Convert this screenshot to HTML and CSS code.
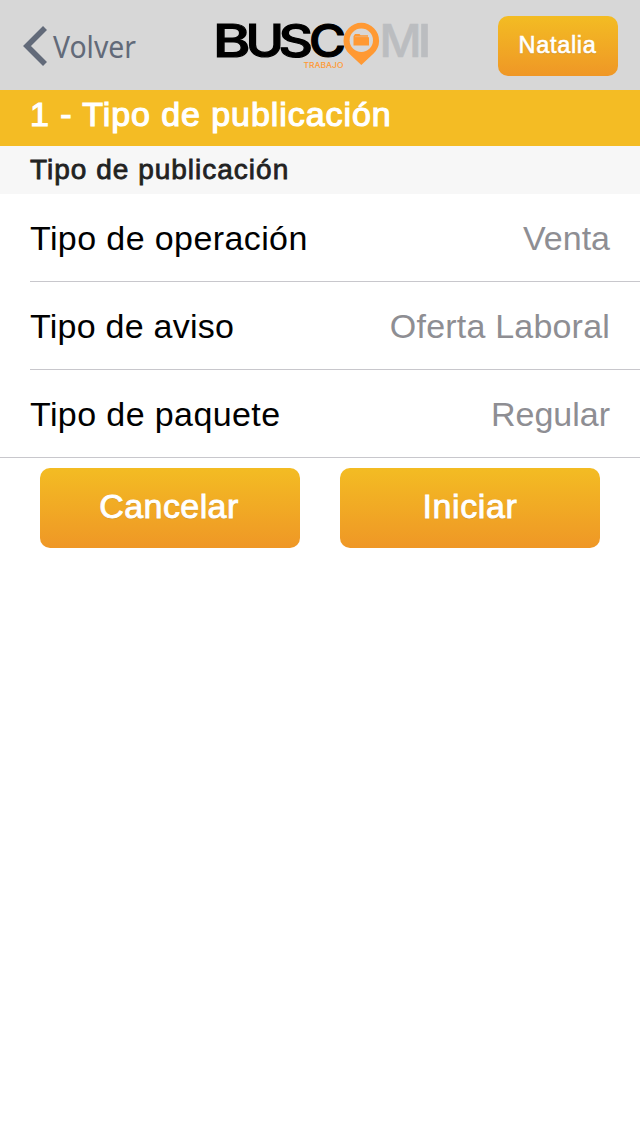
FILE: index.html
```html
<!DOCTYPE html>
<html lang="es">
<head>
<meta charset="utf-8">
<title>Tipo de publicación</title>
<link rel="stylesheet" href="styles.css">
</head>
<body>
<header class="topbar">
  <a class="back">
    <svg class="chevron" width="25" height="40" viewBox="0 0 25 40"><path d="M23 2 5 20l18 18" fill="none" stroke="#626a79" stroke-width="5.6"/></svg>
    <svg class="back-label" width="90" height="40"><text x="0" y="31.500" textLength="83" lengthAdjust="spacingAndGlyphs">Volver</text></svg>
  </a>
  <svg class="logo" width="216" height="56" viewBox="214 16 216 56">
    <g class="logo-dark">
      <text x="213" y="56.500" textLength="37.500" lengthAdjust="spacingAndGlyphs">B</text>
      <text x="245.500" y="56.500" textLength="38.500" lengthAdjust="spacingAndGlyphs">U</text>
      <text x="278.500" y="56.500" textLength="34.500" lengthAdjust="spacingAndGlyphs">S</text>
      <text x="309" y="56.500" textLength="37" lengthAdjust="spacingAndGlyphs">C</text>
    </g>
    <path d="M361.300 65 349 53.500a17.800 17.800 0 1 1 24.600 0z" fill="#ff9933"/>
    <circle cx="361.300" cy="40.300" r="11.700" fill="#d7d7d7"/>
    <path d="M353.500 45.500v-9.300l1.500-2.200h4.500l1 1.200h7.500v2h1v8.300z" fill="#ff9933"/>
    <path d="M355 36.700h13" stroke="#e8b98a" stroke-width=".7"/>
    <g class="logo-light">
      <text x="379.500" y="56.500" textLength="42" lengthAdjust="spacingAndGlyphs">M</text>
      <text x="417.500" y="56.500" textLength="14" lengthAdjust="spacingAndGlyphs">I</text>
    </g>
    <text class="logo-sub" x="303.500" y="67.700" textLength="40" lengthAdjust="spacingAndGlyphs">TRABAJO</text>
  </svg>
  <button class="btn btn-user">Natalia</button>
</header>
<main>
  <h1 class="step">1 - Tipo de publicación</h1>
  <h2 class="section">Tipo de publicación</h2>
  <ul class="list">
    <li class="row"><span>Tipo de operación</span><span class="value">Venta</span></li>
    <li class="row"><span class="label-tight">Tipo de aviso</span><span class="value value-long">Oferta Laboral</span></li>
    <li class="row"><span>Tipo de paquete</span><span class="value">Regular</span></li>
  </ul>
  <div class="actions">
    <button class="btn btn-cancel">Cancelar</button>
    <button class="btn btn-start">Iniciar</button>
  </div>
</main>
</body>
</html>
```
FILE: styles.css
```css
* { box-sizing: border-box; }
body { margin: 0; min-height: 1136px; background: #fff; font-family: "Liberation Sans", Arial, sans-serif; color: #000; }
.topbar { display: flex; align-items: flex-start; justify-content: space-between; height: 90px; padding: 16px 22px; background: #d7d7d7; }
.back { display: flex; width: 192px; padding-top: 10px; }
.chevron { display: block; }
.back-label { display: block; overflow: visible; margin-left: 6px; font: 30px "Noto Sans", sans-serif; fill: #626a79; }
.logo { display: block; overflow: visible; margin-right: auto; }
.logo text { font-family: Inter, sans-serif; }
.logo-dark, .logo-light { font-size: 45.500px; font-weight: 500; stroke: #000; stroke-width: 1.2px; }
.logo-light { fill: #bbbdc0; stroke: #bbbdc0; stroke-width: .6px; }
.logo .logo-sub { font-size: 7px; font-weight: 500; fill: #ff9933; }
.btn { padding: 0; border: 0; border-radius: 10px; background: linear-gradient(#f3bc23, #ef9726); color: #fff; font-family: inherit; -webkit-text-stroke: .9px #fff; text-shadow: 0 1px 1px rgba(120, 100, 60, .3); }
.btn-user { width: 120px; height: 60px; padding: 0 1px 2px 0; font-size: 23.500px; letter-spacing: .7px; -webkit-text-stroke-width: .6px; }
.step { height: 56px; margin: 0; padding-left: 30px; background: #f4bc24; color: #fff; font-size: 34px; font-weight: 400; line-height: 49px; letter-spacing: .93px; -webkit-text-stroke: 1.200px #fff; }
.section { height: 48px; margin: 0; padding-left: 30px; background: #f7f7f7; color: #222; font-size: 28px; font-weight: 400; line-height: 47px; letter-spacing: 1px; -webkit-text-stroke: .8px #222; }
.list { margin: 0; padding: 0 0 0 30px; list-style: none; border-bottom: 1px solid #c8c7cc; }
.row { display: flex; justify-content: space-between; height: 88px; padding-right: 30px; border-bottom: 1px solid #c8c7cc; font-size: 34px; line-height: 88px; letter-spacing: .4px; }
.row:last-child { height: 87px; border-bottom: 0; }
.label-tight { letter-spacing: .25px; }
.value { color: #8e8e93; letter-spacing: 0; }
.value-long { letter-spacing: .2px; }
.actions { display: flex; gap: 40px; padding: 10px 40px; }
.actions .btn { width: 260px; height: 80px; padding: 0 2px 4px 0; font-size: 34px; letter-spacing: .4px; }
.actions .btn-start { padding-right: 0; letter-spacing: .6px; }
```
